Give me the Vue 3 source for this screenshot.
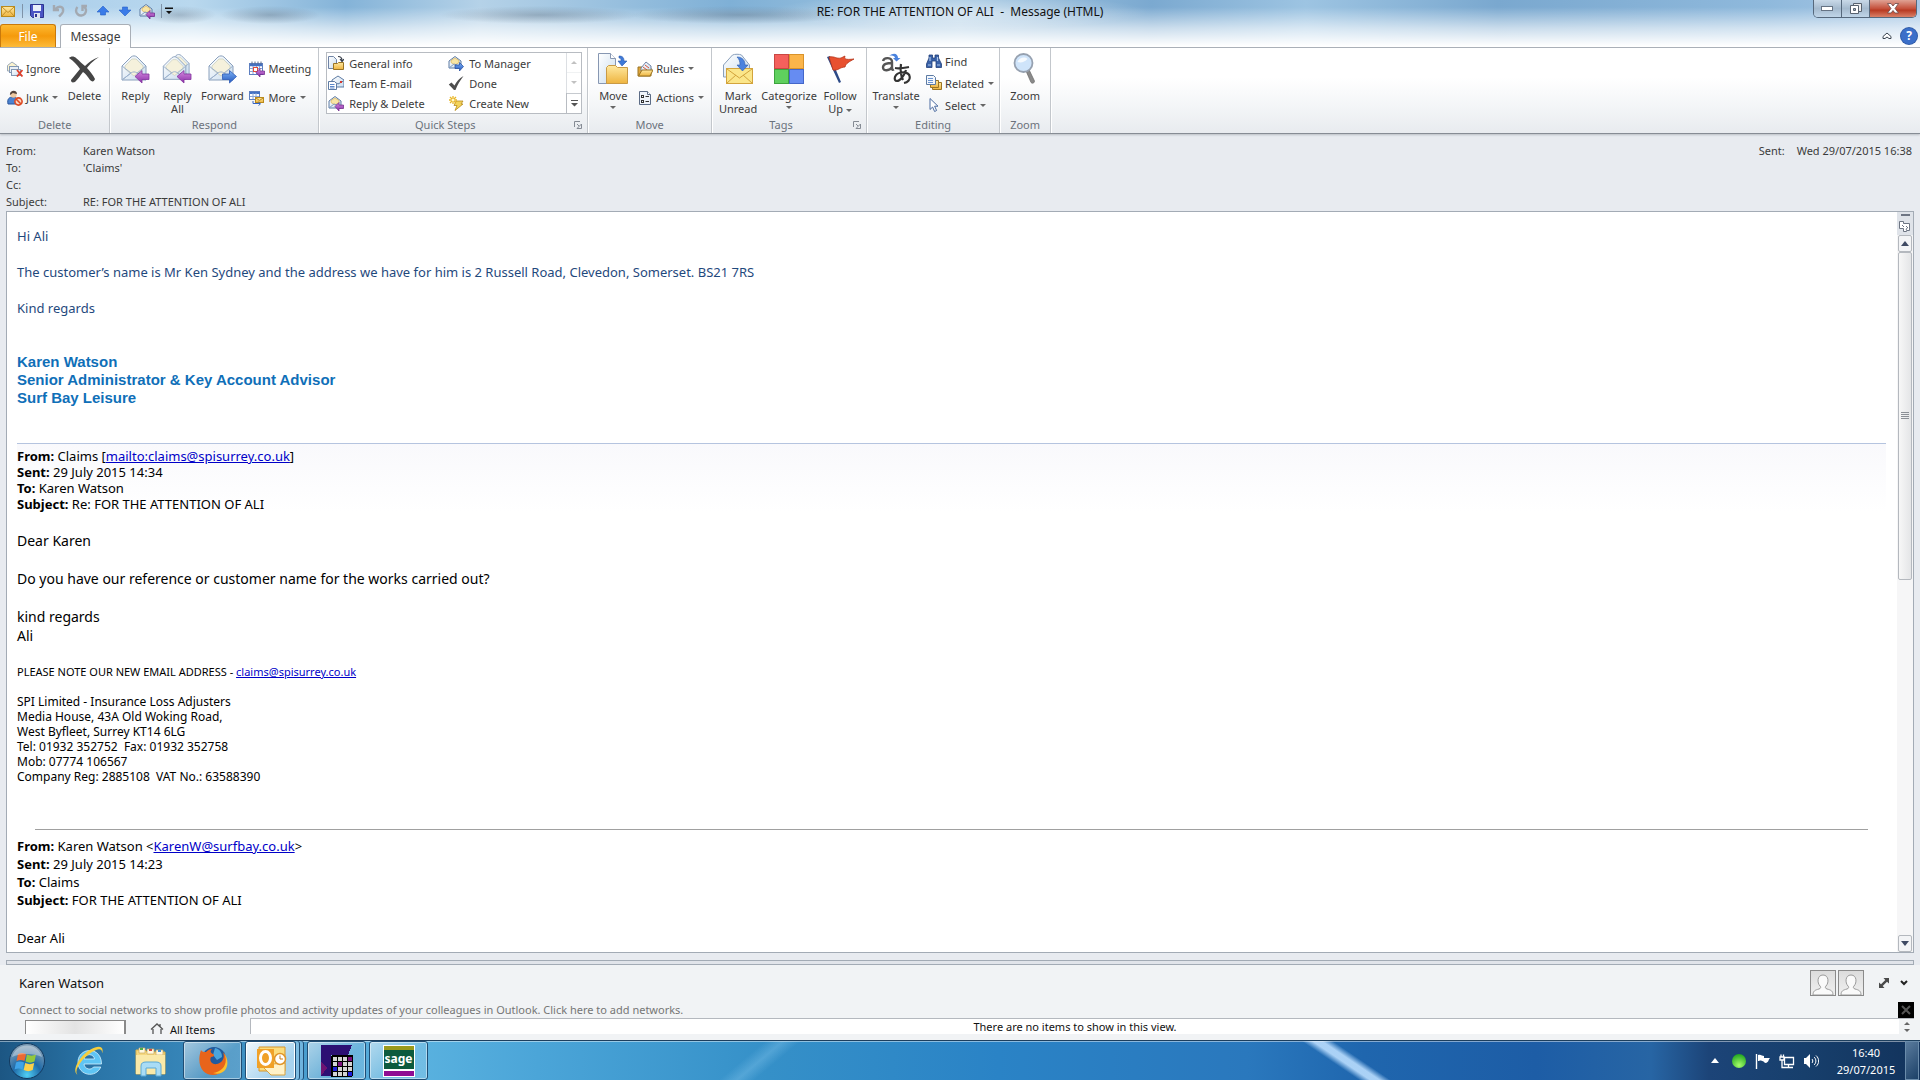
<script setup>
const quickSteps = [
  { label: "General info", icon: "move-small" },
  { label: "To Manager", icon: "forward" },
  { label: "Team E-mail", icon: "team" },
  { label: "Done", icon: "check" },
  { label: "Reply & Delete", icon: "reply" },
  { label: "Create New", icon: "create" },
];

const quickAccess = [
  { icon: "save", label: "Save" },
  { icon: "undo", label: "Undo" },
  { icon: "redo", label: "Redo" },
  { icon: "up", label: "Previous item" },
  { icon: "down", label: "Next item" },
  { icon: "reply", label: "Reply" },
];

const headers = [
  { name: "From:", value: "Karen Watson" },
  { name: "To:", value: "'Claims'" },
  { name: "Cc:", value: "" },
  { name: "Subject:", value: "RE: FOR THE ATTENTION OF ALI" },
];
</script>

<template>
  <!-- Icon sprite -->
  <svg class="sprite" aria-hidden="true">
    <defs>
      <linearGradient id="g-paper" x1="0" y1="0" x2="1" y2="1">
        <stop offset="0" stop-color="#ffffff" />
        <stop offset="1" stop-color="#c9dcee" />
      </linearGradient>
      <linearGradient id="g-gold" x1="0" y1="0" x2="0" y2="1">
        <stop offset="0" stop-color="#ffe9a0" />
        <stop offset="1" stop-color="#eeb43f" />
      </linearGradient>
      <linearGradient id="g-purple" x1="0" y1="0" x2="0" y2="1">
        <stop offset="0" stop-color="#d58be0" />
        <stop offset="1" stop-color="#8a2fa8" />
      </linearGradient>
      <linearGradient id="g-blue" x1="0" y1="0" x2="0" y2="1">
        <stop offset="0" stop-color="#7fb4f5" />
        <stop offset="1" stop-color="#2458c0" />
      </linearGradient>
      <radialGradient id="g-orb" cx="0.5" cy="0.9" r="0.8">
        <stop offset="0" stop-color="#4fd0f5" />
        <stop offset="0.5" stop-color="#1f6aa8" />
        <stop offset="1" stop-color="#7d9cb5" />
      </radialGradient>
      <radialGradient id="g-green" cx="0.5" cy="0.8" r="0.8">
        <stop offset="0" stop-color="#a6ff6a" />
        <stop offset="1" stop-color="#1fa51f" />
      </radialGradient>
    </defs>

    <symbol id="mail" viewBox="0 0 16 16">
      <rect x="1.500" y="3.500" width="13" height="10" fill="url(#g-gold)" stroke="#b98a1d" />
      <path d="M2 4l6 5.500 6-5.500M2 13l4.500-5M14 13l-4.500-5" fill="none" stroke="#c28f2a" />
    </symbol>
    <symbol id="save" viewBox="0 0 16 16">
      <path d="M1.500 1.500h13v13h-11l-2-2z" fill="#4a55c4" stroke="#2c348f" />
      <rect x="4" y="2" width="8" height="6" fill="#e9effa" />
      <rect x="5" y="10" width="6" height="5" fill="#dfe4ee" />
      <rect x="6" y="11" width="2" height="3" fill="#2c348f" />
    </symbol>
    <symbol id="undo" viewBox="0 0 16 16">
      <path d="M3 2v5h5M4 6.500c4-4.500 9-3 8 2-.5 2-2 3-4 5" fill="none" stroke="#a3a9b1" stroke-width="2.400" />
    </symbol>
    <symbol id="redo" viewBox="0 0 16 16">
      <path d="M4.500 4a5 5 0 1 0 6.500-.5M9.500 8V3h4.500" fill="none" stroke="#a3a9b1" stroke-width="2.400" />
    </symbol>
    <symbol id="up" viewBox="0 0 16 16">
      <path d="M8 3l6 6h-3.500v3h-5V9H2z" fill="#3a7be8" stroke="#2560c8" stroke-width=".6" />
    </symbol>
    <symbol id="down" viewBox="0 0 16 16">
      <path d="M8 13l6-6h-3.500V4h-5v3H2z" fill="#3a7be8" stroke="#2560c8" stroke-width=".6" />
    </symbol>
    <symbol id="reply" viewBox="0 0 16 16">
      <path d="M1 6l6-4.500L13 6v7H1z" fill="url(#g-paper)" stroke="#5d7ba3" />
      <path d="M3 5.500L7 3l4 2.500v2L7 10 3 7.500z" fill="#f8e5a4" stroke="#d1a84b" stroke-width=".6" />
      <path d="M1 13l5-4 3 1" fill="none" stroke="#7f9bc0" />
      <path d="M7 11.500l4-4V10h4.500v3.500H11V16z" fill="url(#g-purple)" stroke="#6b2386" stroke-width=".7" />
    </symbol>
    <symbol id="forward" viewBox="0 0 16 16">
      <path d="M1 6l6-4.500L13 6v7H1z" fill="url(#g-paper)" stroke="#5d7ba3" />
      <path d="M3 5.500L7 3l4 2.500v2L7 10 3 7.500z" fill="#f8e5a4" stroke="#d1a84b" stroke-width=".6" />
      <path d="M1 13l5-4 3 1" fill="none" stroke="#7f9bc0" />
      <path d="M15.500 11.500l-4-4V10H7v3.500h4.500V16z" fill="url(#g-blue)" stroke="#20489c" stroke-width=".7" />
    </symbol>
    <symbol id="ignore" viewBox="0 0 16 16">
      <path d="M.5 4.500L5 1l5 3.500V10H.5z" fill="#fbf3cf" stroke="#9aa9ba" />
      <rect x="2.500" y="5.500" width="9" height="6" fill="#e9f0f7" stroke="#8298b5" />
      <rect x="4.500" y="8.500" width="9" height="6" fill="url(#g-paper)" stroke="#8298b5" />
      <path d="M10 9l5.500 6.500M15.500 9L10 15.500" stroke="#e0402c" stroke-width="1.800" />
    </symbol>
    <symbol id="junk" viewBox="0 0 16 16">
      <path d="M1 14c-1-5 1-7 5-7s5 2 5 7z" fill="#4b83d1" stroke="#2a559b" />
      <circle cx="6.500" cy="4.500" r="3.200" fill="#efc9a0" />
      <path d="M3 5c-1-5 7-6 7-1-2 0-3-1-4-1s-1 1-3 2z" fill="#54453c" />
      <circle cx="11.500" cy="11.500" r="3.600" fill="#fbd5c3" stroke="#dd4a22" stroke-width="1.600" />
      <path d="M9 9l5 5" stroke="#dd4a22" stroke-width="1.600" />
    </symbol>
    <symbol id="meeting" viewBox="0 0 16 16">
      <rect x=".5" y="2.500" width="13" height="11" fill="#fff" stroke="#5d7fc0" />
      <path d="M1 4h12" stroke="#4472c4" stroke-width="2.500" />
      <path d="M1 7.500h12M1 10.500h12M4 5v8M7.500 5v8M10.500 5v8" stroke="#8ba6d6" />
      <path d="M3 .5v3M6 .5v3M9 .5v3M12 .5v3" stroke="#55698c" />
      <rect x="4.500" y="6.500" width="4" height="4" fill="#fff" stroke="#e24a3a" />
      <path d="M7 11.500l4-4V10h4.500v3.500H11V16z" fill="url(#g-purple)" stroke="#6b2386" stroke-width=".7" />
    </symbol>
    <symbol id="more" viewBox="0 0 16 16">
      <rect x=".5" y="1.500" width="10" height="8" fill="#fff" stroke="#5d7fc0" />
      <path d="M1 3h10" stroke="#4472c4" stroke-width="2" />
      <path d="M1 6.500h9M4 3v6M7 3v6" stroke="#8ba6d6" />
      <rect x="6.500" y="7.500" width="8" height="5" fill="url(#g-gold)" stroke="#b98a1d" />
      <path d="M7 8l3.500 2.500L14 8" fill="none" stroke="#b98a1d" />
      <path d="M4 11v2.500h7M9.500 12l2 1.800-2 1.800" fill="none" stroke="#3464c4" />
    </symbol>
    <symbol id="move-small" viewBox="0 0 16 16">
      <path d="M.5 1.500h5l3 3v9h-8z" fill="url(#g-paper)" stroke="#6f83a5" />
      <path d="M10 1.500c3 0 4 1 4 4M12 4l2 2.500L16 4" fill="none" stroke="#333b48" stroke-width="1.200" />
      <path d="M5.500 8.500h4l1-1h5v7h-10z" fill="url(#g-gold)" stroke="#9b7422" />
    </symbol>
    <symbol id="team" viewBox="0 0 16 16">
      <path d="M4 5l6-4 6 4v7H4z" fill="url(#g-paper)" stroke="#5d7ba3" />
      <path d="M4.500 6l5.500 3 5.500-3" fill="none" stroke="#5d7ba3" />
      <rect x="12" y="6" width="2" height="2" fill="#d63a2f" />
      <path d="M.5 6.500h6l2 2v6h-8z" fill="#fff" stroke="#5d7ba3" />
      <path d="M2 9.500h4.500M2 11.500h4.500M2 13h4.500" stroke="#5b87c9" />
    </symbol>
    <symbol id="check" viewBox="0 0 16 16">
      <path d="M.8 9.500L3.500 7.500l3 3C8.500 6.500 11 3.500 15.500 1 12 5.500 9.500 10 7.500 15H6z" fill="#4d4d4d" />
    </symbol>
    <symbol id="create" viewBox="0 0 16 16">
      <path d="M8 6h7l-2 3h2l-8 6.500 2-5H6z" fill="#f3d35b" stroke="#b78b1c" stroke-width=".8" />
      <path d="M5 1v8M1 5h8M2 2l6 6M8 2L2 8" stroke="#e9b524" stroke-width="1.300" />
      <circle cx="5" cy="5" r="1.500" fill="#fff8c9" />
    </symbol>
    <symbol id="rules" viewBox="0 0 16 16">
      <path d="M1 6h5l1 1h7v8H1z" fill="#e0a63a" stroke="#9b7422" />
      <path d="M4 7l5-6 5 4v5H4z" fill="url(#g-paper)" stroke="#6f83a5" />
      <path d="M6 6l4 3M8 4l4 3" stroke="#d6523c" />
      <path d="M1.500 15L5 9h11l-3 6z" fill="url(#g-gold)" stroke="#9b7422" />
    </symbol>
    <symbol id="actions" viewBox="0 0 16 16">
      <path d="M2.500 1.500h8l3 3v10h-11z" fill="#eef3fa" stroke="#5c6c86" />
      <path d="M10.500 1.500v3h3" fill="#fff" stroke="#5c6c86" />
      <rect x="4.500" y="5.500" width="2" height="2" fill="none" stroke="#333" />
      <rect x="4.500" y="10.500" width="2" height="2" fill="none" stroke="#333" />
      <path d="M8.500 6.500H12M8.500 11.500H12" stroke="#333" />
    </symbol>
    <symbol id="find" viewBox="0 0 16 16">
      <path d="M3 2h3.500v3H9V2h3.500v3l3 6v3.500H10V8H6v6.500H.5V11L3 5z" fill="#3a62a8" stroke="#213f78" stroke-width=".8" />
      <path d="M2 12h3M11 12h3M4 4v4M11.500 4v4" stroke="#a9c4ea" stroke-width="1.200" />
    </symbol>
    <symbol id="related" viewBox="0 0 16 16">
      <path d="M6.500 7.500h9v7h-9z" fill="url(#g-gold)" stroke="#9b7422" />
      <path d="M4.500 5.500h8v7h-8z" fill="url(#g-gold)" stroke="#9b7422" />
      <path d="M.5 .5h7l2 2v7h-9z" fill="#f3f7fc" stroke="#5d7ba3" />
      <path d="M2 3.500h5M2 5.500h5M2 7.500h5" stroke="#6a94d2" />
    </symbol>
    <symbol id="select" viewBox="0 0 16 16">
      <path d="M4 1.500v11l2.600-2.500 2 4.500 2-1-2-4.300H12z" fill="#fff" stroke="#4a6aa0" />
    </symbol>

    <symbol id="delete-lg" viewBox="0 0 32 32">
      <path d="M1 5c2-2 5-2 7 0 4 3 6 6 9 8 4-4 8-7 14-9-6 4-9 7-12 11 3 3 6 7 8 11-1 3-3 3-5 1-3-4-4-6-7-8-3 4-5 7-8 10-3 1-4 0-4-2 3-4 6-7 9-11C9 12 6 8 1 5z" fill="#454545" />
    </symbol>
    <symbol id="env-lg" viewBox="0 0 32 32">
      <path d="M3 13L12 4c2-1.500 4-1.500 6 0l9 9v14H3z" fill="url(#g-paper)" stroke="#8aa0bc" />
      <path d="M6 13l7-7h4l7 7v3l-9 7-9-7z" fill="#f5f1dc" stroke="#c9cdb9" stroke-width=".7" />
      <path d="M3 13l9 7-9 7M27 13l-9 7 9 7M3 27l9-7c2-1.500 4-1.500 6 0l9 7" fill="none" stroke="#9db2cd" />
    </symbol>
    <symbol id="reply-lg" viewBox="0 0 32 32">
      <use href="#env-lg" />
      <path d="M16 23.500l7-6V21h7v5.500h-7V30z" fill="url(#g-purple)" stroke="#8435a0" stroke-width=".8" />
    </symbol>
    <symbol id="replyall-lg" viewBox="0 0 32 32">
      <use href="#env-lg" x="4" y="-1" width="29" height="28" />
      <use href="#env-lg" x="-1" y="1" width="31" height="30" />
      <path d="M16 23.500l7-6V21h7v5.500h-7V30z" fill="url(#g-purple)" stroke="#8435a0" stroke-width=".8" />
    </symbol>
    <symbol id="forward-lg" viewBox="0 0 32 32">
      <use href="#env-lg" />
      <path d="M30.500 23.500l-7-6V21h-7v5.500h7V30z" fill="url(#g-blue)" stroke="#2e5cb8" stroke-width=".8" />
    </symbol>
    <symbol id="move-lg" viewBox="0 0 32 32">
      <path d="M1.500.5h12l5 5v25h-17z" fill="url(#g-paper)" stroke="#8797b2" />
      <path d="M13.500.5v5h5" fill="#fff" stroke="#8797b2" />
      <path d="M22 3c4 0 5 2 5 5h3l-5 5-4-5h3c0-2 0-3-2-3z" fill="#3f7ad8" stroke="#2b5aad" stroke-width=".6" />
      <path d="M9.500 14.500l2-2h7l2 2h10v16h-21z" fill="url(#g-gold)" stroke="#c99a45" />
    </symbol>
    <symbol id="unread-lg" viewBox="0 0 32 32">
      <path d="M1.500 12l9-10c2-1 7-1 9 0l8 10v12h-26z" fill="url(#g-paper)" stroke="#8aa0bc" />
      <rect x="4.500" y="15.500" width="26" height="15" fill="#fbe68a" stroke="#d3a43c" />
      <path d="M5 16l12.500 9L30 16M5 30l9-8M30 30l-9-8" fill="none" stroke="#d3a43c" />
      <path d="M15 4c6 0 8 4 8 8h3l-5.500 6L15 12h3c0-4-1-6-3-8z" fill="#4a82de" stroke="#2b5aad" stroke-width=".6" />
    </symbol>
    <symbol id="categorize-lg" viewBox="0 0 32 32">
      <rect x="1.500" y="1.500" width="14" height="14" fill="#f4605c" stroke="#c94743" />
      <rect x="16.500" y="1.500" width="14" height="14" fill="#fbb54a" stroke="#d9932a" />
      <rect x="1.500" y="16.500" width="14" height="14" fill="#5fd05e" stroke="#3da33d" />
      <rect x="16.500" y="16.500" width="14" height="14" fill="#668cf2" stroke="#4467c9" />
    </symbol>
    <symbol id="flag-lg" viewBox="0 0 32 32">
      <path d="M3 4l3-1 11 26-2 1z" fill="#2d4a87" />
      <path d="M5 4c6-1 7 2 12 1l4-2c-1 3 0 4 9 3-5 3-8 4-9 8-5 0-7 4-12 3z" fill="#e8502f" stroke="#b53418" stroke-width=".8" />
    </symbol>
    <symbol id="translate-lg" viewBox="0 0 32 32">
      <path d="M3 8c1-4 9-4 9 1v7c0 1 1 1 2 .5M12 10c-5 0-9 1-9 4.500 0 4 7 3.500 9-.5" fill="none" stroke="#555" stroke-width="2.400" />
      <path d="M9 3c5-4 9-2 9 2h2.500l-4 3.500L13 5h2c0-2-3-3-6-2z" fill="#4a82de" />
      <path d="M15 15c5 1 9 0 14-1M21 11c-1 7 0 12 2 16M26 17c-2 6-6 11-9 11-4 0-3-8 5-8.500 10-.5 10 9 2 10.500" fill="none" stroke="#333" stroke-width="2.200" />
    </symbol>
    <symbol id="zoom-lg" viewBox="0 0 32 32">
      <path d="M17 18l3-1.500 5.500 11.500c0 2-2 3-3.500 1.500z" fill="#8a8a8a" stroke="#5c5c5c" stroke-width=".6" />
      <circle cx="14.500" cy="10" r="9" fill="#cfe4fa" stroke="#96a1b0" stroke-width="1.800" />
      <path d="M8.500 9c1-4 7-6 10-3-3 3-6 4-10 3z" fill="#fff" opacity=".8" />
    </symbol>

    <symbol id="person" viewBox="0 0 24 24">
      <path d="M2 24c0-4 2-5 6-6 2-.7 2-2 1-3-3-3-3-11 3-11s6 8 3 11c-1 1-1 2.300 1 3 4 1 6 2 6 6z" fill="#fafafa" stroke="#9a9a9a" />
    </symbol>
  </svg>

  <div class="desktop">
    <div class="window">
      <div class="chrome">
        <div class="titlebar">
          <div class="quick-access">
            <svg class="ico"><use href="#mail" /></svg>
            <span class="divider"></span>
            <button v-for="item in quickAccess" :key="item.icon" type="button" :aria-label="item.label">
              <svg class="ico"><use :href="'#' + item.icon" /></svg>
            </button>
            <span class="divider"></span>
            <button type="button" class="customize" aria-label="Customize Quick Access Toolbar">
              <svg width="8" height="8" viewBox="0 0 8 8"><path d="M0 .5h8v1.500H0zM1 4h6L4 7z" fill="#111" /></svg>
            </button>
          </div>
          <h1>RE: FOR THE ATTENTION OF ALI&nbsp; -&nbsp; Message (HTML)</h1>
          <div class="window-controls">
            <button type="button" aria-label="Minimize">
              <svg width="13" height="6" viewBox="0 0 13 6"><rect x=".5" y=".5" width="11" height="4" fill="#fff" stroke="#667384" /></svg>
            </button>
            <button type="button" aria-label="Restore">
              <svg width="12" height="12" viewBox="0 0 12 12">
                <path d="M3.500 .5h8v8h-8z" fill="#eee" stroke="#58626f" />
                <path d="M.5 2.500h8v8h-8z" fill="#fff" stroke="#58626f" />
                <path d="M3.500 5.500h2v2h-2z" fill="#9fb0c4" stroke="#58626f" />
              </svg>
            </button>
            <button type="button" class="close" aria-label="Close">
              <svg width="12" height="11" viewBox="0 0 12 11">
                <path d="M.5.500h3.500l2 2.500 2-2.500h3.500L8 5.500l3.500 4.500H8L6 7.500 4 10H.5L4 5.500z" fill="#fff" stroke="#6b4a4a" stroke-width=".8" />
              </svg>
            </button>
          </div>
        </div>
        <div class="tabs">
          <button type="button" class="file-tab">File</button>
          <button type="button" class="tab">Message</button>
          <div class="tab-tools">
            <button type="button" aria-label="Minimize the Ribbon">
              <svg width="10" height="8" viewBox="0 0 10 8"><path d="M1 4.500L5 1l4 3.500v2H7L5 5 3 6.500H1z" fill="#fff" stroke="#3a4450" /></svg>
            </button>
            <button type="button" class="help" aria-label="Help">?</button>
          </div>
        </div>
      </div>

      <div class="ribbon">
        <section class="group">
          <div class="tools">
            <div class="stack">
              <button type="button" class="small"><svg class="ico"><use href="#ignore" /></svg>Ignore</button>
              <button type="button" class="small"><svg class="ico"><use href="#junk" /></svg>Junk<i class="caret"></i></button>
            </div>
            <button type="button" class="big"><svg class="ico-lg"><use href="#delete-lg" /></svg>Delete</button>
          </div>
          <h2>Delete</h2>
        </section>
        <section class="group">
          <div class="tools">
            <button type="button" class="big"><svg class="ico-lg"><use href="#reply-lg" /></svg>Reply</button>
            <button type="button" class="big"><svg class="ico-lg"><use href="#replyall-lg" /></svg>Reply<br />All</button>
            <button type="button" class="big mid"><svg class="ico-lg"><use href="#forward-lg" /></svg>Forward</button>
            <div class="stack">
              <button type="button" class="small"><svg class="ico"><use href="#meeting" /></svg>Meeting</button>
              <button type="button" class="small"><svg class="ico"><use href="#more" /></svg>More<i class="caret"></i></button>
            </div>
          </div>
          <h2>Respond</h2>
        </section>
        <section class="group has-launcher">
          <div class="tools">
            <div class="gallery">
              <div class="steps">
                <button v-for="step in quickSteps" :key="step.label" type="button" class="small">
                  <svg class="ico"><use :href="'#' + step.icon" /></svg>{{ step.label }}
                </button>
              </div>
              <div class="gallery-scroll">
                <button type="button" aria-label="Row up" disabled><i class="caret flip"></i></button>
                <button type="button" aria-label="Row down" disabled><i class="caret"></i></button>
                <button type="button" class="expand" aria-label="More quick steps">
                  <svg width="7" height="7" viewBox="0 0 7 7"><path d="M0 0h7v1H0zM0 3h7L3.500 6.500z" fill="#555" /></svg>
                </button>
              </div>
            </div>
          </div>
          <h2>Quick Steps</h2>
          <button type="button" class="launcher" aria-label="Manage Quick Steps">
            <svg width="8" height="8" viewBox="0 0 8 8"><path d="M.5 6V.5H6M3 3l2 2M7.500 3v4.500H3z" fill="none" stroke="#858b94" /></svg>
          </button>
        </section>
        <section class="group">
          <div class="tools">
            <button type="button" class="big"><svg class="ico-lg"><use href="#move-lg" /></svg>Move<i class="caret"></i></button>
            <div class="stack">
              <button type="button" class="small"><svg class="ico"><use href="#rules" /></svg>Rules<i class="caret"></i></button>
              <button type="button" class="small"><svg class="ico"><use href="#actions" /></svg>Actions<i class="caret"></i></button>
            </div>
          </div>
          <h2>Move</h2>
        </section>
        <section class="group snug has-launcher">
          <div class="tools">
            <button type="button" class="big mid"><svg class="ico-lg"><use href="#unread-lg" /></svg>Mark<br />Unread</button>
            <button type="button" class="big wide"><svg class="ico-lg"><use href="#categorize-lg" /></svg>Categorize<i class="caret"></i></button>
            <button type="button" class="big mid"><svg class="ico-lg"><use href="#flag-lg" /></svg>Follow<span>Up<i class="caret"></i></span></button>
          </div>
          <h2>Tags</h2>
          <button type="button" class="launcher" aria-label="Message Options">
            <svg width="8" height="8" viewBox="0 0 8 8"><path d="M.5 6V.5H6M3 3l2 2M7.500 3v4.500H3z" fill="none" stroke="#858b94" /></svg>
          </button>
        </section>
        <section class="group snug">
          <div class="tools">
            <button type="button" class="big wide"><svg class="ico-lg"><use href="#translate-lg" /></svg>Translate<i class="caret"></i></button>
            <div class="stack">
              <button type="button" class="small tight"><svg class="ico"><use href="#find" /></svg>Find</button>
              <button type="button" class="small tight"><svg class="ico"><use href="#related" /></svg>Related<i class="caret"></i></button>
              <button type="button" class="small tight"><svg class="ico"><use href="#select" /></svg>Select<i class="caret"></i></button>
            </div>
          </div>
          <h2>Editing</h2>
        </section>
        <section class="group">
          <div class="tools">
            <button type="button" class="big"><svg class="ico-lg"><use href="#zoom-lg" /></svg>Zoom</button>
          </div>
          <h2>Zoom</h2>
        </section>
      </div>

      <div class="mail-header">
        <dl class="fields">
          <template v-for="row in headers" :key="row.name">
            <dt>{{ row.name }}</dt>
            <dd>{{ row.value }}</dd>
          </template>
        </dl>
        <dl class="sent">
          <dt>Sent:</dt>
          <dd>Wed 29/07/2015 16:38</dd>
        </dl>
      </div>

      <div class="reader">
        <article class="message">
          <div class="reply-text">
            <p>Hi Ali</p>
            <p>The customer’s name is Mr Ken Sydney and the address we have for him is 2 Russell Road, Clevedon, Somerset. BS21 7RS</p>
            <p>Kind regards</p>
          </div>
          <div class="signature">
            Karen Watson<br />
            Senior Administrator &amp; Key Account Advisor<br />
            Surf Bay Leisure
          </div>

          <div class="quoted-head">
            <b>From:</b> Claims [<a href="mailto:claims@spisurrey.co.uk">mailto:claims@spisurrey.co.uk</a>]<br />
            <b>Sent:</b> 29 July 2015 14:34<br />
            <b>To:</b> Karen Watson<br />
            <b>Subject:</b> Re: FOR THE ATTENTION OF ALI
          </div>
          <div class="quoted-text">
            <p>Dear Karen</p>
            <p>Do you have our reference or customer name for the works carried out?</p>
            <p>kind regards<br />Ali</p>
          </div>
          <div class="contact">
            <p>PLEASE NOTE OUR NEW EMAIL ADDRESS - <a href="mailto:claims@spisurrey.co.uk">claims@spisurrey.co.uk</a></p>
            <address>
              SPI Limited - Insurance Loss Adjusters<br />
              Media House, 43A Old Woking Road,<br />
              West Byfleet, Surrey KT14 6LG<br />
              Tel: 01932 352752&nbsp; Fax: 01932 352758<br />
              Mob: 07774 106567<br />
              Company Reg: 2885108&nbsp; VAT No.: 63588390
            </address>
          </div>

          <hr />
          <div class="original">
            <b>From:</b> Karen Watson &lt;<a href="mailto:KarenW@surfbay.co.uk">KarenW@surfbay.co.uk</a>&gt;<br />
            <b>Sent:</b> 29 July 2015 14:23<br />
            <b>To:</b> Claims<br />
            <b>Subject:</b> FOR THE ATTENTION OF ALI
            <p>Dear Ali</p>
          </div>
        </article>
        <div class="scrollbar">
          <div class="split-box">
            <span></span>
            <svg width="14" height="13" viewBox="0 0 14 13">
              <path d="M1.500 1.500h4v2h6v7h-3v1h-3v-3h-4z" fill="#fff" stroke="#6d7583" />
              <path d="M4 5l2 2M8 6l2 2M8 10l1-2" stroke="#6d7583" />
            </svg>
          </div>
          <button type="button" aria-label="Scroll up"><i class="arrow flip"></i></button>
          <div class="track"><div class="thumb"><span></span></div></div>
          <button type="button" aria-label="Scroll down"><i class="arrow"></i></button>
        </div>
      </div>

      <div class="splitter"></div>

      <div class="people-pane">
        <div class="person-row">
          <h3>Karen Watson</h3>
          <button type="button" class="avatar" aria-label="Karen Watson"><svg><use href="#person" /></svg></button>
          <button type="button" class="avatar" aria-label="Claims"><svg><use href="#person" /></svg></button>
          <button type="button" class="pane-tool" aria-label="Toggle size">
            <svg width="12" height="12" viewBox="0 0 12 12"><path d="M5.500 1H11v5.500L9 4.700 4.700 9 6.500 11H1V5.500L3 7.300 7.300 3z" fill="#4a4a4a" /></svg>
          </button>
          <button type="button" class="pane-tool" aria-label="Collapse">
            <svg width="8" height="6" viewBox="0 0 8 6"><path d="M1 1l3 3 3-3" fill="none" stroke="#222" stroke-width="2" /></svg>
          </button>
        </div>
        <div class="connect-row">
          <a href="#networks">Connect to social networks to show profile photos and activity updates of your colleagues in Outlook. Click here to add networks.</a>
          <button type="button" class="dismiss" aria-label="Close">
            <svg width="10" height="10" viewBox="0 0 10 10"><path d="M1 1l8 8M9 1L1 9" stroke="#555" stroke-width="2" /></svg>
          </button>
        </div>
        <div class="items-row">
          <div class="photo"></div>
          <a href="#all" class="all-items">
            <svg width="14" height="12" viewBox="0 0 14 12"><path d="M1 6.500L7 1l6 5.500M3 6v6M11 6v6M10 1v2.500" fill="none" stroke="#555" stroke-width="1.300" /></svg>
            All Items
          </a>
          <div class="items">There are no items to show in this view.</div>
          <div class="items-scroll"><i class="caret flip"></i><i class="caret"></i></div>
        </div>
      </div>
    </div>

    <footer class="taskbar">
      <button type="button" class="launch" aria-label="Start">
        <svg width="38" height="38" viewBox="0 0 38 38">
          <circle cx="19" cy="19" r="17.500" fill="url(#g-orb)" stroke="#12395f" />
          <path d="M10 12c3-1.500 5-1.500 8 0l-1.500 7c-3-1.500-5-1.500-8 0z" fill="#ec6a32" />
          <path d="M19 12.500c3 1.500 6 1.500 9 0l-1.500 7c-3 1.500-6 1.500-9 0z" fill="#93c83d" />
          <path d="M8 20.500c3-1.500 5-1.500 8 0l-1.500 7c-2.500-1.500-5-1.500-8 0z" fill="#3fa3e8" />
          <path d="M17.200 21c3 1.500 6 1.500 9 0l-1.500 7c-3 1.500-6 1.500-9 0z" fill="#fcd04a" />
          <path d="M4 15a15.500 15.500 0 0 1 30 0c-8-4-22-4-30 0z" fill="#fff" opacity=".35" />
        </svg>
      </button>
      <button type="button" class="launch" aria-label="Internet Explorer">
        <svg width="32" height="34" viewBox="0 0 32 34">
          <path d="M28.500 20H11c.5 5.500 7.500 6.500 9.500 3h7.300C23 34.500 5.500 32 5 18.500 4.800 3 28.500 1.500 28.500 20zM11 15h10.500c-.5-5.500-9.500-6-10.500 0z" fill="#5ec4f4" stroke="#d3f1ff" stroke-width=".8" />
          <path d="M5 31C-3 28 8 8 22 3.500c6-2 9 .5 7 6 .5-4-2-5-6-3.500C11 11-1 27 5 31z" fill="#f7ce3c" />
        </svg>
      </button>
      <button type="button" class="launch" aria-label="Windows Explorer">
        <svg width="34" height="32" viewBox="0 0 34 32">
          <path d="M2 5h9l2 2h18v22H2z" fill="#f5d880" stroke="#d9b34e" />
          <path d="M5 3h6v5H5zM13 4h7v5h-7zM22 5h7v5h-7z" fill="#fff8df" stroke="#cfae5d" stroke-width=".7" />
          <path d="M6 3h3v2H6z" fill="#4fae46" />
          <path d="M15 4h3v2h-3z" fill="#d8493a" />
          <path d="M24 5h3v2h-3z" fill="#3f8fd8" />
          <path d="M2 10h29v19H2z" fill="#fae9a8" />
          <path d="M7 31V21c0-3 2-4 5-4h10c3 0 5 1 5 4v10h-5v-8H12v8z" fill="#a9dcf5" stroke="#5ba9d6" />
        </svg>
      </button>
      <button type="button" class="task" aria-label="Firefox">
        <svg width="32" height="32" viewBox="0 0 32 32">
          <circle cx="17" cy="14" r="12" fill="#205a9e" />
          <path d="M18 3c5 1 7 5 7 9l-5 3-4-5z" fill="#4aa5dc" />
          <path d="M4 5c1 2 3 2 5 2 2-2 4-3 6-3-2 2-2 4 1 5 2 1 1 3-2 3-2 4 1 8 6 7 6-1 8-7 6-12 8 9 3 23-10 23C6 30-1 20 4 5z" fill="#e8641b" />
          <path d="M27 8c5 10-1 19-11 20 12 4 19-9 11-20z" fill="#fbc02d" />
        </svg>
      </button>
      <button type="button" class="task active" aria-label="Outlook">
        <svg width="32" height="32" viewBox="0 0 32 32">
          <path d="M4 2h26v24H4z" fill="#fbdc7d" stroke="#d8952a" />
          <path d="M6 20l10 10h14V18z" fill="#fff2c8" stroke="#d9a440" />
          <path d="M2 4h17v19H2z" fill="#f0a128" />
          <ellipse cx="10.500" cy="13" rx="5" ry="6.500" fill="none" stroke="#fff" stroke-width="3" />
          <circle cx="25" cy="14" r="5.500" fill="#fff" stroke="#e0962b" stroke-width="1.500" />
          <path d="M25 10.500V14h3" fill="none" stroke="#c97b17" />
        </svg>
      </button>
      <button type="button" class="task" aria-label="Reports">
        <svg width="34" height="32" viewBox="0 0 34 32" shape-rendering="crispEdges">
          <path d="M1 0h31l-4 10H11v21H1z" fill="#2c0f73" />
          <path d="M1 17l6 6-6 8z" fill="#6d1272" />
          <rect x="11" y="10" width="22" height="22" rx="2" fill="#000" />
          <path d="M13 12h4v4h-4zM18 12h4v4h-4zM23 12h4v4h-4zM13 17h4v4h-4zM23 17h4v4h-4zM28 17h4v4h-4zM18 22h4v4h-4zM23 22h4v4h-4zM28 22h4v4h-4zM13 27h4v4h-4zM18 27h4v4h-4zM23 27h4v4h-4z" fill="#d4d4d4" />
          <path d="M18 17h4v4h-4zM28 12h4v4h-4z" fill="#7c1180" />
          <path d="M13 22h4v4h-4zM28 27h4v4h-4z" fill="#2020d8" />
        </svg>
      </button>
      <button type="button" class="task" aria-label="Sage">
        <span class="sage">sage</span>
      </button>

      <div class="tray">
        <svg viewBox="0 0 16 16"><path d="M8 5l4 5H4z" fill="#fff" /></svg>
        <svg viewBox="0 0 16 16"><circle cx="8" cy="8" r="7" fill="url(#g-green)" /></svg>
        <svg viewBox="0 0 16 16"><path d="M1.500 1v15" stroke="#fff" stroke-width="1.400" /><path d="M3 2c3-1 4 1 6 1v2h6c-2 2-1 4-4 5-2 0-2-2-4-2-2-1-2 0-4 0z" fill="#fff" /></svg>
        <svg viewBox="0 0 16 16">
          <path d="M5.500 4.500h9v7h-9zM9.500 12v2M6 14.500h8M1 4h4v3H1zM2 1.500V4M4.500 1.500V4M3 7v7.500h3" fill="none" stroke="#fff" stroke-width="1.300" />
        </svg>
        <svg viewBox="0 0 16 16">
          <path d="M1 5h2l4-4v14l-4-4H1z" fill="#fff" />
          <path d="M9 6c1 1 1 3 0 4M11 4c2.500 2 2.500 6 0 8M13 2.500c3.500 3 3.500 8 0 11" fill="none" stroke="#fff" />
        </svg>
        <time class="clock">16:40<br />29/07/2015</time>
        <button type="button" class="show-desktop" aria-label="Show desktop"></button>
      </div>
    </footer>
  </div>
</template>

<style>
body {
  margin: 0;
  overflow: hidden;
}
</style>

<style scoped>
.sprite {
  position: absolute;
  width: 0;
  height: 0;
}

.desktop {
  height: 100vh;
  display: flex;
  flex-direction: column;
  font-family: "Noto Sans", "Open Sans", sans-serif;
  font-size: 11px;
  color: #3b3b3b;
}

button {
  font: inherit;
  color: inherit;
  padding: 0;
  border: 0;
  background: none;
}

h1,
h2,
h3,
p,
dl,
dd {
  margin: 0;
  font-weight: normal;
}

svg {
  display: block;
  flex: none;
}

.ico {
  width: 16px;
  height: 16px;
}

.ico-lg {
  width: 32px;
  height: 32px;
}

.caret {
  display: inline-block;
  border: 3px solid transparent;
  border-top-color: #666;
  border-bottom-width: 0;
}

.flip {
  transform: rotate(180deg);
}

.window {
  flex: 1;
  min-height: 0;
  display: flex;
  flex-direction: column;
  background: #e8ebf0;
}

/* Title bar and tabs */
.chrome {
  background:
    radial-gradient(ellipse 50px 9px at 270px 15px, rgba(70, 90, 110, 0.35), transparent),
    radial-gradient(ellipse 36px 9px at 180px 15px, rgba(70, 90, 110, 0.3), transparent),
    radial-gradient(ellipse 100px 9px at 540px 15px, rgba(70, 90, 110, 0.35), transparent),
    radial-gradient(ellipse 110px 9px at 740px 15px, rgba(70, 90, 110, 0.35), transparent),
    radial-gradient(ellipse 190px 18px at 958px 12px, rgba(255, 255, 255, 0.5), transparent),
    linear-gradient(to bottom, transparent 15%, rgba(255, 255, 255, 0.6) 60%, #fff 98%),
    linear-gradient(to right, #a9cdea 0, #b9d8ee 10%, #84b3d8 18%, #b5d2e8 25%, #7fb0d6 38%, #a5c8e2 50%, #7ba9d0 60%, #9dc4e2 68%, #7aa8cf 78%, #8fb9dc 92%, #a9c8e6 100%);
  border-bottom: 1px solid #a9afb7;
}

.titlebar {
  height: 24px;
  display: grid;
  grid-template-columns: 1fr auto 1fr;
  align-items: start;
}

.titlebar h1 {
  font-size: 12px;
  line-height: 24px;
  color: #111;
}

.quick-access {
  height: 22px;
  display: flex;
  align-items: center;
  gap: 6px;
}

.quick-access .divider {
  width: 1px;
  height: 14px;
  background: #7f93a8;
}

.quick-access .customize {
  margin-left: -3px;
}

.window-controls {
  justify-self: end;
  margin-right: 3px;
  display: flex;
  height: 17px;
  border: 1px solid #56687c;
  border-top: 0;
  border-radius: 0 0 5px 5px;
  overflow: hidden;
}

.window-controls button {
  width: 28px;
  display: flex;
  align-items: center;
  justify-content: center;
  background: linear-gradient(#c9d9e8, #a5bace 50%, #c0d5e8);
  border-right: 1px solid #56687c;
}

.window-controls .close {
  width: 46px;
  border: 0;
  background: linear-gradient(#e0a294, #c5513c 50%, #b83a22 60%, #da8168);
}

.tabs {
  height: 23px;
  display: flex;
  font-size: 12px;
}

.tabs .file-tab {
  width: 56px;
  color: #fff;
  border: 1px solid #c8790c;
  border-bottom: 0;
  border-radius: 3px 3px 0 0;
  background: linear-gradient(#fdb931, #f59a0b 50%, #fdbb3a);
}

.tabs .tab {
  width: 71px;
  margin: 0 0 -1px 4px;
  border: 1px solid #a9afb7;
  border-bottom: 0;
  border-radius: 3px 3px 0 0;
  background: #fff;
}

.tab-tools {
  margin-left: auto;
  padding-right: 3px;
  display: flex;
  align-items: center;
  gap: 9px;
}

.help {
  width: 16px;
  height: 16px;
  border-radius: 50%;
  background: #3b6fc9;
  box-shadow: 0 0 0 1px #2f5aa6;
  color: #fff;
  font-weight: bold;
  line-height: 16px;
}

/* Ribbon */
.ribbon {
  display: flex;
  background: linear-gradient(#fff 35%, #f3f5f7 70%, #e8ebef);
  border-bottom: 1px solid #868c94;
  box-shadow: 0 1px 2px #b9bdc4;
}

.group {
  position: relative;
  padding: 2px 4px 0;
  border-right: 1px solid #c3c7cc;
  box-shadow: 1px 0 0 #fff;
}

.group.snug {
  padding: 2px 2px 0;
}

.tools {
  height: 66px;
  display: flex;
}

.group h2 {
  font-size: 11px;
  line-height: 17px;
  text-align: center;
  color: #6b727c;
}

.has-launcher h2 {
  padding-right: 16px;
}

.big {
  width: 42px;
  padding-top: 3px;
  display: flex;
  flex-direction: column;
  align-items: center;
  line-height: 13px;
  white-space: nowrap;
}

.big .ico-lg {
  margin-bottom: 4px;
}

.big > .caret {
  margin-top: 4px;
}

.big span .caret {
  margin-left: 3px;
  vertical-align: middle;
}

.big.mid {
  width: 48px;
}

.big.wide {
  width: 54px;
}

.stack {
  padding: 0 3px;
  display: flex;
  flex-direction: column;
  justify-content: center;
}

.small {
  height: 29px;
  display: flex;
  align-items: center;
  gap: 3px;
  white-space: nowrap;
}

.small .caret {
  margin-left: 1px;
}

.small.tight {
  height: 22px;
}

.gallery {
  display: flex;
  margin: 2px 1px 2px 3px;
  border: 1px solid #b8bcc2;
  background: #fff;
}

.steps {
  display: grid;
  grid-template-columns: 120px 118px;
  padding-left: 1px;
}

.steps .small {
  height: 20px;
  gap: 5px;
}

.gallery-scroll {
  display: flex;
  flex-direction: column;
  width: 14px;
  border-left: 1px solid #dcdfe3;
}

.gallery-scroll button {
  flex: 1;
  display: flex;
  align-items: center;
  justify-content: center;
  border-bottom: 1px solid #dcdfe3;
}

.gallery-scroll button:disabled {
  opacity: 0.4;
}

.gallery-scroll .expand {
  border-bottom: 0;
  box-shadow: 0 0 0 1px #b8bcc2;
}

.launcher {
  position: absolute;
  right: 5px;
  bottom: 4px;
}

/* Message header */
.mail-header {
  padding: 8px 8px 1px 6px;
  display: flex;
  justify-content: space-between;
  line-height: 17px;
}

.fields {
  display: grid;
  grid-template-columns: 77px auto;
  grid-auto-rows: 17px;
}

.sent {
  display: flex;
  gap: 12px;
}

/* Reading area */
.reader {
  flex: 1;
  min-height: 0;
  margin: 0 6px;
  display: flex;
  border: 1px solid #a3abb5;
  background: #fff;
}

.message {
  flex: 1;
  padding: 15px 11px 0 10px;
  overflow: hidden;
  font-size: 13px;
  line-height: 18px;
  color: #000;
}

.message a {
  color: #0000c8;
}

.reply-text {
  color: #1f497d;
}

.reply-text p {
  margin-bottom: 18px;
}

.signature {
  margin-top: 36px;
  font-family: "Liberation Sans", Arial, sans-serif;
  font-size: 15px;
  font-weight: bold;
  color: #0f6fb8;
}

.quoted-head {
  margin-top: 36px;
  padding-top: 4px;
  border-top: 1px solid #b5c4df;
  background: linear-gradient(#f9f9fc, #fff);
  line-height: 16px;
}

.quoted-text {
  margin-top: 19px;
  font-size: 14px;
  line-height: 19px;
}

.quoted-text p {
  margin-bottom: 19px;
}

.contact {
  font-size: 11px;
  line-height: 15px;
}

.contact address {
  margin-top: 15px;
  font-size: 12px;
  font-style: normal;
}

hr {
  margin: 45px 18px 7px;
  border: 0;
  border-top: 1px solid #a0a0a0;
}

.original p {
  margin-top: 20px;
}

.scrollbar {
  width: 16px;
  display: flex;
  flex-direction: column;
  background: #f6f6f7;
}

.split-box {
  height: 23px;
  background: #dfe3e9;
  display: flex;
  flex-direction: column;
  align-items: center;
  gap: 4px;
  padding-top: 2px;
  box-sizing: border-box;
}

.split-box span {
  width: 9px;
  height: 2px;
  background: #6d7583;
}

.scrollbar button {
  height: 17px;
  margin: 0 1px;
  display: flex;
  align-items: center;
  justify-content: center;
  border: 1px solid #b4b8be;
  border-radius: 2px;
  background: #f3f4f6;
}

.arrow {
  border: 4px solid transparent;
  border-top: 5px solid #3f4a63;
  border-bottom-width: 0;
}

.track {
  flex: 1;
  margin: 0 1px;
}

.thumb {
  height: 48%;
  box-sizing: border-box;
  display: flex;
  align-items: center;
  justify-content: center;
  border: 1px solid #b4b8be;
  border-radius: 2px;
  background: linear-gradient(to right, #f7f7f7, #e4e5e7);
}

.thumb span {
  width: 8px;
  height: 7px;
  background: repeating-linear-gradient(#8c9096 0 1px, transparent 1px 2px);
}

.splitter {
  height: 3px;
  margin: 7px 6px 0;
  border: 1px solid #a3abb5;
  background: #e1e4ea;
}

/* People pane */
.people-pane {
  padding: 4px 6px 6px;
  background: #f1f3f5;
}

.person-row {
  display: flex;
  align-items: center;
  padding-left: 13px;
  height: 27px;
}

.person-row h3 {
  flex: 1;
  font-size: 13px;
  color: #111;
}

.avatar {
  width: 26px;
  height: 26px;
  margin-right: 2px;
  border: 1px solid #8a8a8a;
  background: linear-gradient(#dcdcdc, #f0f0f0);
}

.avatar svg {
  width: 24px;
  height: 24px;
}

.pane-tool {
  width: 20px;
  display: flex;
  justify-content: center;
}

.avatar + .pane-tool {
  margin-left: 8px;
}

.connect-row {
  display: flex;
  align-items: flex-end;
  justify-content: space-between;
  height: 22px;
  padding-left: 13px;
}

.connect-row a {
  line-height: 16px;
  color: #767676;
  text-decoration: none;
}

.dismiss {
  width: 16px;
  height: 16px;
  display: flex;
  align-items: center;
  justify-content: center;
  background: #000;
}

.items-row {
  height: 16px;
  display: flex;
  overflow: hidden;
}

.photo {
  width: 98px;
  margin: 2px 24px 0 19px;
  border: 1px solid #8a8a8a;
  border-width: 1px 2px 0 1px;
  background: linear-gradient(to right, #fff, #e3e3e3 50%, #fff);
}

.all-items {
  width: 100px;
  display: flex;
  gap: 6px;
  padding-top: 5px;
  line-height: 14px;
  color: #111;
  text-decoration: none;
}

.items {
  flex: 1;
  border: 1px solid #b4b8be;
  border-width: 1px 0 0 1px;
  background: #fff;
  text-align: center;
  line-height: 15px;
  color: #111;
}

.items-scroll {
  width: 15px;
  display: flex;
  flex-direction: column;
  align-items: center;
  justify-content: center;
  gap: 4px;
  border-top: 1px solid #b4b8be;
}

/* Taskbar */
.taskbar {
  height: 40px;
  box-sizing: border-box;
  display: flex;
  align-items: stretch;
  border-top: 1px solid #1d3f5e;
  box-shadow: inset 0 1px 0 rgba(255, 255, 255, 0.45);
  background:
    linear-gradient(140deg, transparent 46%, rgba(150, 210, 245, 0.3) 50%, transparent 54%) 560px 0 / 400px 100% no-repeat,
    linear-gradient(34deg, transparent 40%, rgba(178, 215, 250, 0.95) 47%, rgba(178, 215, 250, 0.95) 53%, transparent 60%) 1296px 0 / 100px 100% no-repeat,
    linear-gradient(to right, #1c5683 0, #2a75a8 5%, #3c8dc0 12%, #5bb3e0 21%, #4ba5d8 28%, #3590c8 40%, #2a83c6 52%, #2a78bd 65%, #1f66ae 71%, #1d5da6 80%, #2765a4 86%, #1c4478 89%, #173f6c 94%, #12335c 100%);
}

.launch {
  width: 62px;
  display: flex;
  align-items: center;
  justify-content: center;
}

.launch:first-child {
  width: 54px;
  margin-right: 4px;
}

.task {
  width: 59px;
  margin-right: 3px;
  display: flex;
  align-items: center;
  justify-content: center;
  border: 1px solid #1f4d74;
  border-radius: 3px;
  background: linear-gradient(135deg, rgba(255, 255, 255, 0.55), rgba(255, 255, 255, 0.15) 60%);
  box-shadow: inset 0 0 0 1px rgba(255, 255, 255, 0.45);
}

.launch + .task {
  margin-left: 1px;
}

.task.active {
  width: 51px;
  margin-right: 11px;
  background: linear-gradient(135deg, #f0f7fc, #a8d3ee 70%);
  box-shadow: inset 0 0 0 1px #fff, 3px 0 0 #7cbce2, 4px 0 0 #1f4d74, 7px 0 0 #6fb4de, 8px 0 0 #1f4d74;
}

.sage {
  width: 32px;
  height: 32px;
  box-sizing: border-box;
  border: 1px solid #fff;
  background: linear-gradient(#9a9a1c 0 4px, #0c5a3e 4px 23px, #fff 23px 25px, #8f0d93 25px);
  color: #fff;
  font-size: 12px;
  font-weight: bold;
  line-height: 26px;
  text-align: center;
}

.tray {
  margin-left: auto;
  display: flex;
  align-items: center;
  padding-right: 1px;
  color: #fff;
}

.tray svg {
  width: 16px;
  height: 16px;
  margin-right: 8px;
}

.clock {
  width: 78px;
  font-size: 11px;
  line-height: 17px;
  text-align: center;
}

.show-desktop {
  align-self: stretch;
  width: 14px;
  border: 1px solid #6a8cab;
  background: linear-gradient(135deg, #5a7b9d, #1c4168);
}
</style>
